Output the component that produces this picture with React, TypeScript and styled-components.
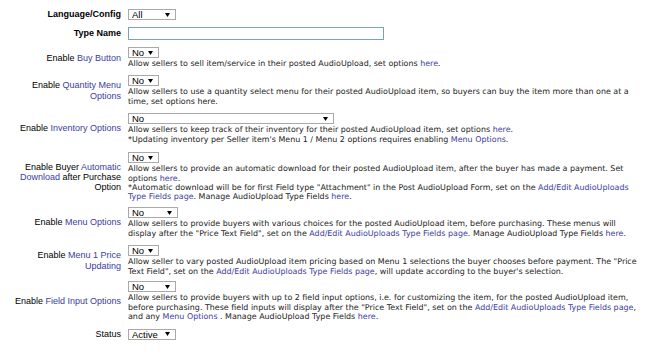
import React from 'react'
import styled, { createGlobalStyle } from 'styled-components'

const GlobalStyle = createGlobalStyle`
  body {
    margin: 0;
    background: #ffffff;
  }
`

const Form = styled.div`
  display: flex;
  flex-direction: column;
  padding: 9px 8px 0 8px;
  font-family: 'Liberation Sans', Arial, sans-serif;
`

const Row = styled.div<{ $gap: number }>`
  display: flex;
  align-items: center;
  gap: 7px;
  margin-top: ${({ $gap }) => $gap}px;
`

const Label = styled.div<{ $bold?: boolean }>`
  width: 113px;
  flex-shrink: 0;
  text-align: right;
  font-size: 9px;
  line-height: 10.1px;
  font-weight: ${({ $bold }) => ($bold ? 700 : 400)};
  color: #000000;
`

const Value = styled.div`
  flex: 1;
  min-width: 0;
  display: flex;
  flex-direction: column;
  align-items: flex-start;
`

const Link = styled.a`
  color: #3c3ca0;
  text-decoration: none;
  cursor: pointer;
`

const SelectBox = styled.div<{ $width: number }>`
  box-sizing: border-box;
  width: ${({ $width }) => $width}px;
  height: 11px;
  border: 1px solid #a9a9a9;
  background: #ffffff;
  display: flex;
  align-items: center;
  justify-content: space-between;
  padding: 0 5px 0 3px;
  font-size: 9.5px;
  line-height: 9px;
  color: #000000;
`

const TextInput = styled.input`
  box-sizing: border-box;
  width: 256px;
  height: 13px;
  margin: 0;
  padding: 0 2px;
  border: 1px solid #7a9fd8;
  font-size: 9px;
  outline: none;
`

const Note = styled.div`
  margin-top: 1px;
  font-family: 'DejaVu Sans', Verdana, sans-serif;
  font-size: 7.95px;
  line-height: 9.25px;
  color: #222222;
`

const Arrow = () => (
  <svg width="5" height="4" viewBox="0 0 5 4">
    <path d="M0 0h5L2.5 4z" fill="#000" />
  </svg>
)

const Select: React.FC<{ value: string; width: number }> = ({ value, width }) => (
  <SelectBox $width={width}>
    <span>{value}</span>
    <Arrow />
  </SelectBox>
)

const FIELDS_PAGE = 'Add/Edit AudioUploads Type Fields page'

const App: React.FC = () => {
  return (
    <>
      <GlobalStyle />
      <Form>
        <Row $gap={0}>
          <Label $bold>Language/Config</Label>
          <Value>
            <Select value="All" width={48} />
          </Value>
        </Row>

        <Row $gap={7}>
          <Label $bold>Type Name</Label>
          <Value>
            <TextInput type="text" />
          </Value>
        </Row>

        <Row $gap={7}>
          <Label>
            Enable <Link>Buy Button</Link>
          </Label>
          <Value>
            <Select value="No" width={31} />
            <Note>
              Allow sellers to sell item/service in their posted AudioUpload, set options{' '}
              <Link>here</Link>.
            </Note>
          </Value>
        </Row>

        <Row $gap={7}>
          <Label>
            Enable <Link>Quantity Menu Options</Link>
          </Label>
          <Value>
            <Select value="No" width={31} />
            <Note>
              Allow sellers to use a quantity select menu for their posted AudioUpload item, so
              buyers can buy the item more than one at a time, set options here.
            </Note>
          </Value>
        </Row>

        <Row $gap={7.5}>
          <Label>
            Enable <Link>Inventory Options</Link>
          </Label>
          <Value>
            <Select value="No" width={206} />
            <Note>
              Allow sellers to keep track of their inventory for their posted AudioUpload item, set
              options <Link>here</Link>.
              <br />
              *Updating inventory per Seller item's Menu 1 / Menu 2 options requires enabling{' '}
              <Link>Menu Options</Link>.
            </Note>
          </Value>
        </Row>

        <Row $gap={8.5}>
          <Label>
            Enable Buyer <Link>Automatic Download</Link> after Purchase Option
          </Label>
          <Value>
            <Select value="No" width={31} />
            <Note>
              Allow sellers to provide an automatic download for their posted AudioUpload item,
              after the buyer has made a payment. Set options <Link>here</Link>.
              <br />
              *Automatic download will be for first Field type "Attachment" in the Post
              AudioUpload Form, set on the{' '}
              <Link>
                Add/Edit AudioUploads
                <br />
                Type Fields page
              </Link>
              . Manage AudioUpload Type Fields <Link>here</Link>.
            </Note>
          </Value>
        </Row>

        <Row $gap={6}>
          <Label>
            Enable <Link>Menu Options</Link>
          </Label>
          <Value>
            <Select value="No" width={50} />
            <Note>
              Allow sellers to provide buyers with various choices for the posted AudioUpload item,
              before purchasing. These menus will display after the "Price Text Field", set on the{' '}
              <Link>{FIELDS_PAGE}</Link>. Manage AudioUpload Type Fields <Link>here</Link>.
            </Note>
          </Value>
        </Row>

        <Row $gap={7.5}>
          <Label>
            Enable <Link>Menu 1 Price Updating</Link>
          </Label>
          <Value>
            <Select value="No" width={31} />
            <Note>
              Allow seller to vary posted AudioUpload item pricing based on Menu 1 selections the
              buyer chooses before payment. The "Price Text Field", set on the{' '}
              <Link>{FIELDS_PAGE}</Link>, will update according to the buyer's selection.
            </Note>
          </Value>
        </Row>

        <Row $gap={5.5}>
          <Label>
            Enable <Link>Field Input Options</Link>
          </Label>
          <Value>
            <Select value="No" width={48} />
            <Note>
              Allow sellers to provide buyers with up to 2 field input options, i.e. for
              customizing the item, for the posted AudioUpload item, before purchasing. These field
              inputs will display after the "Price Text Field", set on the{' '}
              <Link>{FIELDS_PAGE}</Link>, and any <Link>Menu Options</Link> . Manage AudioUpload
              Type Fields <Link>here</Link>.
            </Note>
          </Value>
        </Row>

        <Row $gap={7.5}>
          <Label>Status</Label>
          <Value>
            <Select value="Active" width={48} />
          </Value>
        </Row>
      </Form>
    </>
  )
}

export default App
